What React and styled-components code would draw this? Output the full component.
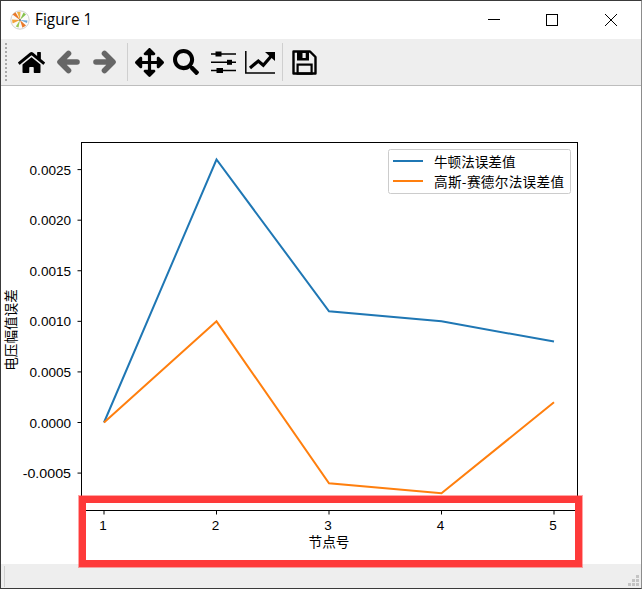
import React from 'react';
import styled, { createGlobalStyle } from 'styled-components';
import { FaHome, FaArrowsAlt, FaSearch } from 'react-icons/fa';

const GlobalStyle = createGlobalStyle`
  html, body {
    margin: 0;
    padding: 0;
    background: #ffffff;
  }
`;

const xTicks = [104, 216.5, 329, 441.5, 554];
const yTicks = ['0.0025', '0.0020', '0.0015', '0.0010', '0.0005', '0.0000', '-0.0005'];
const newton = [0, 0.0026, 0.0011, 0.001, 0.0008];
const gauss = [0, 0.001, -0.0006, -0.0007, 0.0002];

const toY = (v) => 422.5 - v * 101160;
const toPoints = (values) => values.map((v, i) => `${xTicks[i]},${toY(v)}`).join(' ');

function AppLogo() {
  return (
    <svg width="20" height="20" viewBox="0 0 20 20">
      <circle cx="10" cy="10" r="9.2" fill="#fbfbfb" stroke="#cfcfcf" strokeWidth="1" />
      <path d="M10 10 L2.5 4.5 L5.5 2.2 Z" fill="#e8792b" />
      <path d="M10 10 L2 9.5 L2.6 13.5 Z" fill="#f2a23a" />
      <path d="M10 10 L7 2 L10.5 1.8 Z" fill="#f0b040" />
      <path d="M10 10 L13.5 2.6 L16 4.6 Z" fill="#86c24c" />
      <path d="M10 10 L16 15.5 L12.5 17.8 Z" fill="#e8792b" />
      <path d="M10 10 L8.5 17.5 L5.8 16.4 Z" fill="#9cc653" />
      <path d="M10 10 L17.5 10.5 L17 13 Z" fill="#6aa8d8" />
      <circle cx="10" cy="10" r="1.1" fill="#7a7a7a" />
    </svg>
  );
}

function ArrowIcon({ flip }) {
  return (
    <svg width="24" height="24" viewBox="0 0 24 24" style={{ transform: flip ? 'scaleX(-1)' : undefined }}>
      <path d="M21 12H5M12.5 3.5L4 12l8.5 8.5" fill="none" stroke="#666" strokeWidth="5.6" strokeLinecap="round" strokeLinejoin="round" />
    </svg>
  );
}

function SlidersIcon() {
  return (
    <svg width="25" height="22" viewBox="0 0 25 22">
      <path d="M0 3h25M0 11.3h25M0 19.6h25" stroke="#000" strokeWidth="1.5" />
      <rect x="4.5" y="0.5" width="6" height="5" fill="#000" />
      <rect x="16" y="8.8" width="5" height="5" fill="#000" />
      <rect x="5.5" y="17" width="6.5" height="5" fill="#000" />
    </svg>
  );
}

function ChartIcon() {
  return (
    <svg width="30" height="23" viewBox="0 0 30 23">
      <path d="M0.8 0v22h29.2" fill="none" stroke="#000" strokeWidth="1.5" />
      <path d="M5 17l8.3-7 5 4.3 8-9.3" fill="none" stroke="#000" strokeWidth="3.2" />
      <path d="M20 1h10v9z" fill="#000" />
    </svg>
  );
}

function SaveIcon() {
  return (
    <svg width="25" height="25" viewBox="0 0 25 25">
      <path d="M1.5 1.5H18L23.5 7V23.5H1.5Z" fill="none" stroke="#000" strokeWidth="2.4" strokeLinejoin="round" />
      <path d="M5 1h12v9.5H5z" fill="#000" />
      <rect x="10.5" y="3" width="3.2" height="5" fill="#eeeeee" />
      <rect x="5.6" y="14.6" width="14" height="9" fill="none" stroke="#000" strokeWidth="2.2" />
    </svg>
  );
}

function Chart() {
  return (
    <svg width="640" height="477" viewBox="1 86 640 477">
      <PlotFrame x="81.5" y="142.5" width="496" height="368" />
      {xTicks.map((x, i) => (
        <g key={x}>
          <TickLine x1={x} x2={x} y1="510.5" y2="514.5" />
          <TickText x={x - 1} y="530" textAnchor="middle">{i + 1}</TickText>
        </g>
      ))}
      {yTicks.map((label) => {
        const y = toY(parseFloat(label));
        return (
          <g key={label}>
            <TickLine x1="77.5" x2="81.5" y1={y} y2={y} />
            <TickText
              x="71"
              y={y + 5}
              textAnchor="end"
              textLength={label.length * 6.9}
              lengthAdjust="spacingAndGlyphs"
            >
              {label}
            </TickText>
          </g>
        );
      })}
      <Series points={toPoints(newton)} stroke="#1f77b4" />
      <Series points={toPoints(gauss)} stroke="#ff7f0e" />
      <LegendBox x="388.5" y="149.5" width="182" height="44" rx="2" />
      <Series points="393,161 423,161" stroke="#1f77b4" />
      <Series points="393,181 423,181" stroke="#ff7f0e" />
      <ChartLabel x="434" y="167">牛顿法误差值</ChartLabel>
      <ChartLabel x="434" y="187" textLength="130">高斯-赛德尔法误差值</ChartLabel>
      <ChartLabel x="329" y="547" textAnchor="middle">节点号</ChartLabel>
      <ChartLabel transform="translate(16 330) rotate(-90)" textAnchor="middle">电压幅值误差</ChartLabel>
    </svg>
  );
}

export default function App() {
  return (
    <Window>
      <GlobalStyle />
      <TitleBar>
        <TitleLeft>
          <AppLogo />
          <TitleText>Figure 1</TitleText>
        </TitleLeft>
        <WindowControls>
          <ControlButton aria-label="minimize">
            <svg width="12" height="12" viewBox="0 0 12 12"><path d="M0 5.5h12" stroke="#000" fill="none" /></svg>
          </ControlButton>
          <ControlButton aria-label="maximize">
            <svg width="12" height="12" viewBox="0 0 12 12"><rect x="0.5" y="0.5" width="11" height="11" stroke="#000" fill="none" /></svg>
          </ControlButton>
          <ControlButton aria-label="close">
            <svg width="12" height="12" viewBox="0 0 12 12"><path d="M0 0l12 12M12 0L0 12" stroke="#000" fill="none" /></svg>
          </ControlButton>
        </WindowControls>
      </TitleBar>
      <Toolbar>
        <DragHandle />
        <ToolButton><FaHome size={27} /></ToolButton>
        <ToolButton><ArrowIcon /></ToolButton>
        <ToolButton><ArrowIcon flip /></ToolButton>
        <Separator />
        <ToolButton><FaArrowsAlt size={29} /></ToolButton>
        <ToolButton><FaSearch size={26} /></ToolButton>
        <ToolButton><SlidersIcon /></ToolButton>
        <ToolButton><ChartIcon /></ToolButton>
        <Separator />
        <ToolButton><SaveIcon /></ToolButton>
      </Toolbar>
      <Canvas>
        <Chart />
        <Highlight />
      </Canvas>
      <StatusBar>
        <StatusDivider />
        <SizeGrip viewBox="0 0 11 11" width="11" height="11">
          <path d="M8 0h3v3H8zM4 4h3v3H4zM8 4h3v3H8zM0 8h3v3H0zM4 8h3v3H4zM8 8h3v3H8z" fill="#c4c4c4" />
        </SizeGrip>
      </StatusBar>
    </Window>
  );
}

const Window = styled.div`
  box-sizing: border-box;
  width: 642px;
  height: 589px;
  display: flex;
  flex-direction: column;
  border: 1px solid #3a3a3a;
  border-right-color: #8c8c8c;
  background: #ffffff;
  overflow: hidden;
`;

const TitleBar = styled.div`
  flex: 0 0 38px;
  display: flex;
  align-items: center;
  justify-content: space-between;
  background: #ffffff;
`;

const TitleLeft = styled.div`
  display: flex;
  align-items: center;
  gap: 5px;
  padding-left: 9px;
`;

const TitleText = styled.span`
  font-family: "Open Sans", "Noto Sans", sans-serif;
  font-size: 15.4px;
  line-height: 20px;
  color: #000000;
`;

const WindowControls = styled.div`
  display: flex;
  padding-right: 1px;
`;

const ControlButton = styled.div`
  width: 58.5px;
  height: 38px;
  display: flex;
  align-items: center;
  justify-content: center;
`;

const Toolbar = styled.div`
  flex: 0 0 46px;
  display: flex;
  align-items: center;
  padding-left: 4px;
  background: #eeeeee;
`;

const DragHandle = styled.div`
  box-sizing: border-box;
  width: 2px;
  height: 38px;
  margin-right: 5.5px;
  border-left: 2px dotted #a8a8a8;
`;

const ToolButton = styled.div`
  width: 37px;
  height: 37px;
  display: flex;
  align-items: center;
  justify-content: center;
  color: #000000;
`;

const Separator = styled.div`
  box-sizing: border-box;
  width: 7px;
  height: 38px;
  padding-left: 3px;

  &::before {
    content: '';
    display: block;
    width: 1px;
    height: 100%;
    background: #cfcfcf;
  }
`;

const Canvas = styled.div`
  flex: 1;
  position: relative;
  border-top: 1px solid #bdbdbd;
  background: #ffffff;

  svg {
    display: block;
  }
`;

const Highlight = styled.div`
  position: absolute;
  left: 77.5px;
  top: 410px;
  width: 489px;
  height: 57px;
  border: 7px solid #fe3a3a;
  outline: 1px solid rgba(254, 58, 58, 0.45);
  outline-offset: -0.5px;
`;

const StatusBar = styled.div`
  flex: 0 0 24px;
  display: flex;
  align-items: center;
  justify-content: space-between;
  padding: 0 2px 0 3px;
  background: #eeeeee;
`;

const StatusDivider = styled.div`
  width: 1px;
  height: 21px;
  background: #d0d0d0;
`;

const SizeGrip = styled.svg`
  align-self: flex-end;
  margin-bottom: 2px;
`;

const PlotFrame = styled.rect`
  fill: #ffffff;
  stroke: #000000;
  stroke-width: 1;
`;

const TickLine = styled.line`
  stroke: #000000;
  stroke-width: 1;
`;

const TickText = styled.text`
  font-family: "Liberation Sans", sans-serif;
  font-size: 13.5px;
  fill: #000000;
`;

const ChartLabel = styled.text`
  font-family: "Noto Sans CJK SC", sans-serif;
  font-size: 13.6px;
  fill: #000000;
`;

const Series = styled.polyline`
  fill: none;
  stroke-width: 2;
  stroke-linejoin: miter;
`;

const LegendBox = styled.rect`
  fill: #ffffff;
  stroke: #cccccc;
  stroke-width: 1;
`;
